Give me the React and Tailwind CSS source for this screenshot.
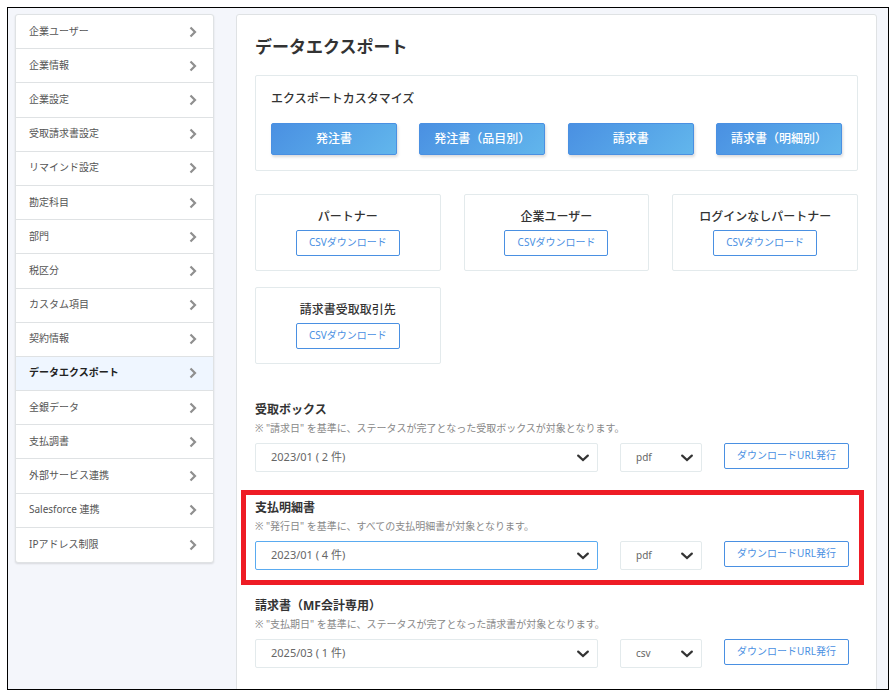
import { useState } from 'react'
import clsx from 'clsx'

const MENU = [
  '企業ユーザー',
  '企業情報',
  '企業設定',
  '受取請求書設定',
  'リマインド設定',
  '勘定科目',
  '部門',
  '税区分',
  'カスタム項目',
  '契約情報',
  'データエクスポート',
  '全銀データ',
  '支払調書',
  '外部サービス連携',
  'Salesforce 連携',
  'IPアドレス制限',
]

const CUSTOM_EXPORTS = ['発注書', '発注書（品目別）', '請求書', '請求書（明細別）']

const CSV_EXPORTS = ['パートナー', '企業ユーザー', 'ログインなしパートナー', '請求書受取取引先']

const BULK_EXPORTS = [
  {
    id: 'inbox',
    title: '受取ボックス',
    note: '※ "請求日" を基準に、ステータスが完了となった受取ボックスが対象となります。',
    month: '2023/01 ( 2 件)',
    format: 'pdf',
  },
  {
    id: 'payment',
    title: '支払明細書',
    note: '※ "発行日" を基準に、すべての支払明細書が対象となります。',
    month: '2023/01 ( 4 件)',
    format: 'pdf',
    highlighted: true,
  },
  {
    id: 'invoice',
    title: '請求書（MF会計専用）',
    note: '※ "支払期日" を基準に、ステータスが完了となった請求書が対象となります。',
    month: '2025/03 ( 1 件)',
    format: 'csv',
  },
]

export default function App() {
  const [active, setActive] = useState('データエクスポート')

  return (
    <div className="h-screen bg-white pt-[7px] pr-[5px] pb-[7px] pl-[7px] font-['Noto_Sans','Noto_Sans_CJK_JP',sans-serif] text-[#333]">
      <div className="flex h-full items-start gap-[22px] overflow-hidden border border-black bg-[#f4f6fb] pt-1.5 pr-[11px] pl-[7px]">
        <SideMenu active={active} onSelect={setActive} />
        <main className="min-w-0 flex-1 rounded-[3px] border border-[#dfe2e4] bg-white px-[18px] pt-[22px] pb-10">
          <h1 className="mb-[18px] text-[17px] leading-5 font-bold">データエクスポート</h1>

          <section className="rounded-[2px] border border-[#e3eaec] px-[15px] pt-3.5 pb-[15px]">
            <h2 className="mb-[15px] text-xs leading-[18px] font-medium">エクスポートカスタマイズ</h2>
            <div className="flex justify-between">
              {CUSTOM_EXPORTS.map((name) => (
                <button
                  key={name}
                  className="h-8 w-[126px] rounded-[2px] border border-[#4a90e2] bg-linear-135 from-[#4a90e2] to-[#62b6ec] text-xs font-medium text-white shadow-[1px_2px_3px_rgba(0,0,0,0.15)]"
                >
                  {name}
                </button>
              ))}
            </div>
          </section>

          <div className="mt-[23px] grid grid-cols-3 gap-x-[23px] gap-y-4">
            {CSV_EXPORTS.map((name) => (
              <section key={name} className="flex flex-col items-center rounded-[2px] border border-[#e3eaec] pt-[13px] pb-3.5">
                <h2 className="mb-1 text-xs leading-[18px] font-medium">{name}</h2>
                <OutlineButton className="w-[104px]">CSVダウンロード</OutlineButton>
              </section>
            ))}
          </div>

          <div className="mt-[37px] flex flex-col gap-[27px]">
            {BULK_EXPORTS.map((item) => (
              <BulkExport key={item.id} item={item} />
            ))}
          </div>
        </main>
      </div>
    </div>
  )
}

function SideMenu({ active, onSelect }) {
  return (
    <nav className="w-[199px] flex-none">
      <ul className="grid min-h-[549px] auto-rows-fr divide-y divide-[#dfe2e4] rounded-[3px] border border-[#dfe2e4] bg-white shadow-[0_1px_2px_rgba(0,0,0,0.12)]">
        {MENU.map((name) => (
          <li key={name}>
            <a
              href="#"
              onClick={() => onSelect(name)}
              className={clsx(
                'flex h-full items-center justify-between pr-4 pl-[13px] text-[10px] leading-4',
                name === active ? 'bg-[#eff6ff] font-bold text-[#222]' : 'text-[#555]',
              )}
            >
              <span className="pb-0.5">{name}</span>
              <svg viewBox="0 0 8 12" className="h-3 w-2 text-[#8f8f8f]" fill="none" stroke="currentColor" strokeWidth="2.2">
                <path d="M1.5 1.5 6 6 1.5 10.5" />
              </svg>
            </a>
          </li>
        ))}
      </ul>
    </nav>
  )
}

// 対象月と形式を選んでダウンロードURLを発行する行
function BulkExport({ item }) {
  return (
    <section className="relative">
      {item.highlighted && (
        <div className="pointer-events-none absolute -top-[9px] -right-1.5 -bottom-[15px] -left-3.5 border-5 border-[#ee1c25]" />
      )}
      <h2 className="text-xs leading-[18px] font-bold">
        <label htmlFor={item.id}>{item.title}</label>
      </h2>
      <p className="mb-1.5 text-[10px] leading-[18px] text-[#888]">{item.note}</p>
      <div className="flex items-start gap-[22px]">
        <Select id={item.id} value={item.month} focused={item.highlighted} className="flex-1 text-[11px]" />
        <Select label={`${item.title} 形式`} value={item.format} className="w-[82px] text-[10px]" />
        <OutlineButton className="mr-[9px] w-[125px]">ダウンロードURL発行</OutlineButton>
      </div>
    </section>
  )
}

function Select({ id, label, value, focused, className }) {
  return (
    <div className={clsx('relative', className)}>
      <select
        id={id}
        aria-label={label}
        defaultValue={value}
        className={clsx(
          'block h-[29px] w-full appearance-none rounded-[2px] border bg-white pr-6 pl-[15px] text-[#666] outline-none',
          focused ? 'border-[#5aabf0]' : 'border-[#e3eaec]',
        )}
      >
        <option>{value}</option>
      </select>
      <svg
        viewBox="0 0 12 8"
        className="pointer-events-none absolute top-[11px] right-[9px] h-2 w-3 text-[#333]"
        fill="none"
        stroke="currentColor"
        strokeWidth="2.2"
        strokeLinecap="round"
      >
        <path d="M1.2 1.6 6 6l4.8-4.4" />
      </svg>
    </div>
  )
}

function OutlineButton({ className, children }) {
  return (
    <button className={clsx('h-[26px] rounded-[2px] border border-[#4a90e2] bg-white pb-0.5 text-[10px] leading-4 text-[#4a90e2]', className)}>
      {children}
    </button>
  )
}
